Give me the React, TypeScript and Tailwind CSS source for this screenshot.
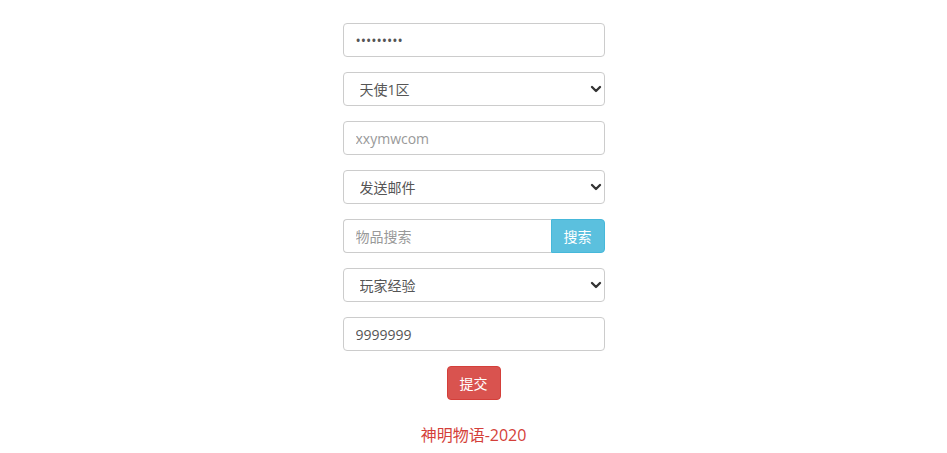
import { ChevronDown } from "lucide-react";

const font = {
  fontFamily: '"Open Sans", "Noto Sans CJK SC", sans-serif',
};

const fieldCls =
  "block h-[34px] w-full rounded-[4px] border border-[#ccc] bg-white px-3 text-[14px] text-[#555] placeholder:text-[#999] outline-none";

function SelectBox({ value, options }: { value: string; options: string[] }) {
  return (
    <div className="relative">
      <select defaultValue={value} className={`${fieldCls} appearance-none pl-4`}>
        {options.map((o) => (
          <option key={o} value={o}>
            {o}
          </option>
        ))}
      </select>
      <ChevronDown
        className="pointer-events-none absolute right-[1px] top-[9px] size-[16px] text-[#333]"
        strokeWidth={3.5}
      />
    </div>
  );
}

export default function App() {
  return (
    <div className="min-h-screen bg-white" style={font}>
      <form className="mx-auto flex w-[262px] flex-col gap-[15px] pt-[23px]">
        <input type="password" defaultValue="123456789" className={fieldCls} />

        <SelectBox value="天使1区" options={["天使1区", "天使2区"]} />

        <input type="text" placeholder="xxymwcom" className={fieldCls} />

        <SelectBox value="发送邮件" options={["发送邮件", "发送物品"]} />

        {/* Item search */}
        <div className="flex h-[34px]">
          <input
            type="text"
            placeholder="物品搜索"
            className="h-full min-w-0 flex-1 rounded-l-[4px] border border-r-0 border-[#ccc] bg-white px-3 text-[14px] text-[#555] placeholder:text-[#999] outline-none"
          />
          <button
            type="button"
            className="h-full w-[54px] rounded-r-[4px] border border-[#46b8da] bg-[#5bc0de] text-[14px] text-white"
          >
            搜索
          </button>
        </div>

        <SelectBox value="玩家经验" options={["玩家经验", "玩家等级"]} />

        <input type="text" defaultValue="9999999" className={fieldCls} />

        <div className="flex justify-center">
          <button
            type="button"
            className="h-[34px] w-[54px] rounded-[4px] border border-[#d43f3a] bg-[#d9534f] text-[14px] text-white"
          >
            提交
          </button>
        </div>
      </form>

      <p className="mt-[24px] text-center text-[16px] leading-[22px] text-[#d43f3a]">
        神明物语-2020
      </p>
    </div>
  );
}
